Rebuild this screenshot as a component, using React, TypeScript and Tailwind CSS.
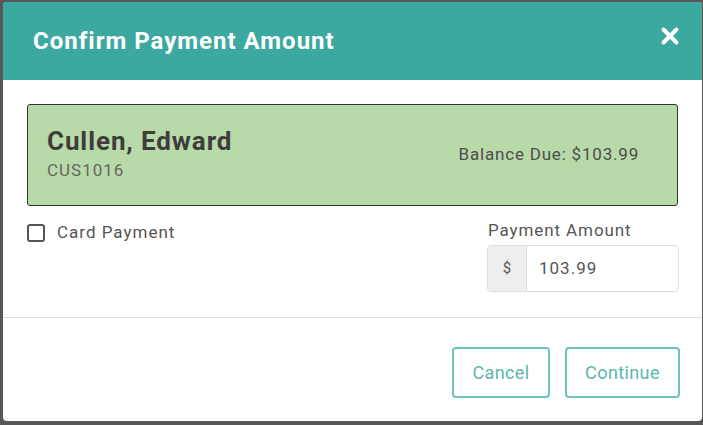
import React from "react";

export default function App() {
  return (
    <div
      className="w-[703px] h-[425px] bg-[#575757] pt-[2px] pl-[3px] pr-[1px] pb-[4px]"
      style={{ fontFamily: "Roboto, 'Liberation Sans', sans-serif" }}
    >
      <div className="h-full bg-white rounded-[4px] overflow-hidden flex flex-col">
        <div className="h-[78px] shrink-0 bg-[#3ba99f] flex items-center justify-between pl-[30px] pr-[22px]">
          <h1 className="text-white text-[24px] font-bold tracking-[1px]">Confirm Payment Amount</h1>
          <svg width="20" height="20" viewBox="0 0 20 20" className="mb-[11px]">
            <path d="M3.5 3.5 L16.5 16.5 M16.5 3.5 L3.5 16.5" stroke="white" strokeWidth="4" strokeLinecap="round" />
          </svg>
        </div>
        <div className="flex-1 px-[24px] pt-[24px]">
          <div className="h-[102px] bg-[#b8d9a8] border-[1.5px] border-[#333] rounded-[3px] flex items-center justify-between pl-[19px] pr-[38px]">
            <div className="flex flex-col">
              <span className="text-[26px] font-bold text-[#3d3d3d] leading-[30px] tracking-[0.9px] -mt-[4px]">Cullen, Edward</span>
              <span className="text-[17px] text-[#666] leading-[20px] mt-[4px] tracking-[1px]">CUS1016</span>
            </div>
            <span className="text-[17px] text-[#4d4d4d] tracking-[0.8px]">Balance Due: $103.99</span>
          </div>
          <div className="flex justify-between mt-[14px]">
            <label className="flex items-center gap-[12px] h-[26px]">
              <span className="w-[18px] h-[18px] border-[2px] border-[#555] rounded-[3px] bg-white" />
              <span className="text-[17px] text-[#555] tracking-[1px]">Card Payment</span>
            </label>
            <div className="flex flex-col w-[192px] mr-[-1px]">
              <span className="text-[17px] text-[#555] leading-[20px] ml-[1px] tracking-[0.9px]">Payment Amount</span>
              <div className="mt-[5px] h-[47px] flex border border-[#ddd] rounded-[4px] overflow-hidden">
                <div className="w-[39px] bg-[#eeeeee] border-r border-[#ddd] flex items-center justify-center text-[15px] text-[#555]">$</div>
                <div className="flex-1 flex items-center pl-[12px] text-[17px] text-[#555] tracking-[1px]">103.99</div>
              </div>
            </div>
          </div>
        </div>
        <div className="h-[104px] shrink-0 border-t border-[#dddddd] flex justify-end items-start pt-[29px] pr-[22px] gap-[15px]">
          <button className="w-[98px] h-[51px] border-[2px] border-[#6cc4ba] rounded-[4px] text-[#5bb8ad] text-[18px] tracking-[0.4px]">Cancel</button>
          <button className="w-[115px] h-[51px] border-[2px] border-[#6cc4ba] rounded-[4px] text-[#5bb8ad] text-[18px] tracking-[0.4px]">Continue</button>
        </div>
      </div>
    </div>
  );
}
